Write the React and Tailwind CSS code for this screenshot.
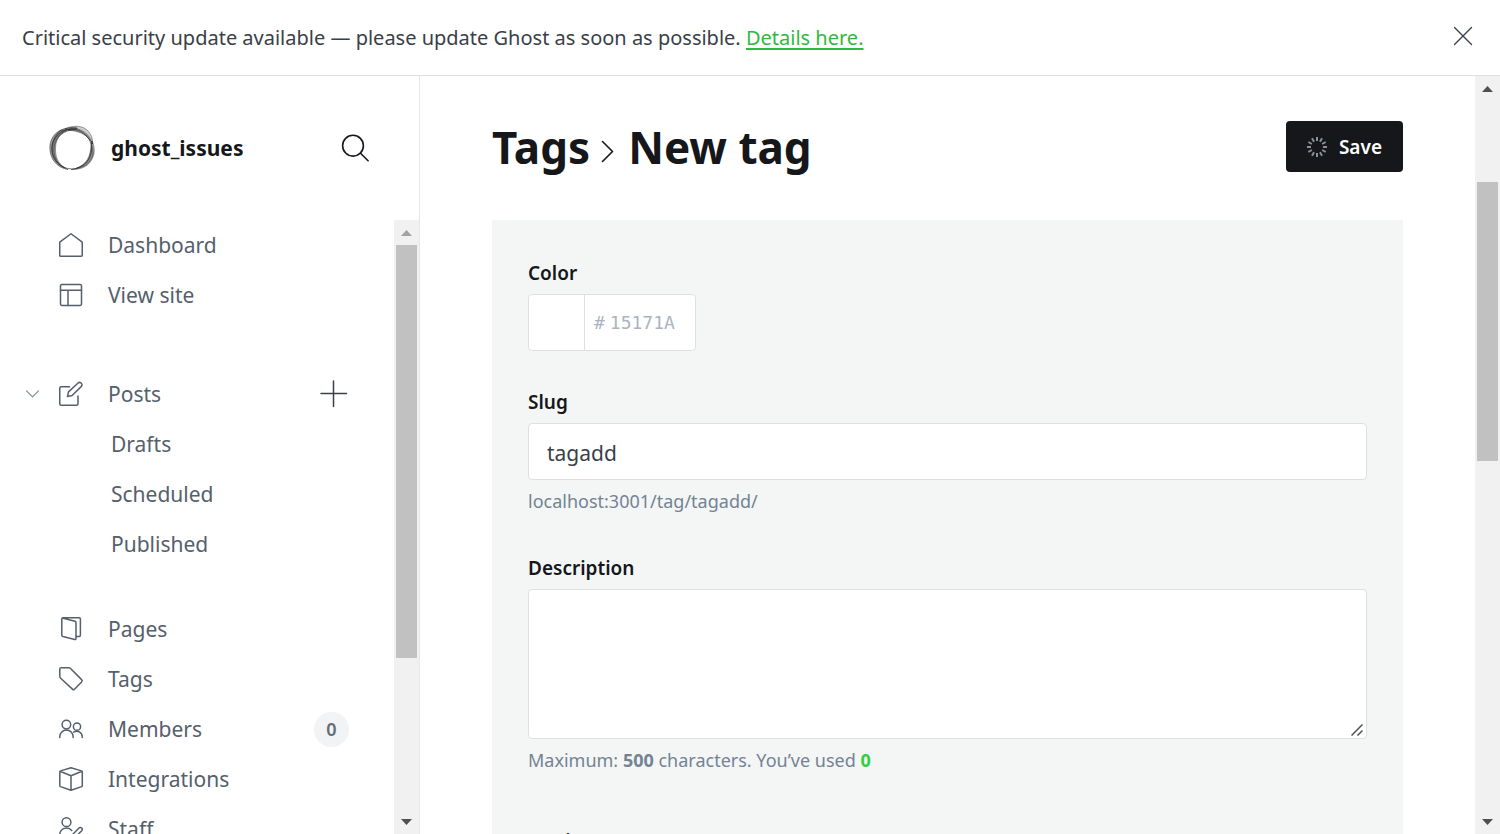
import React, { useState } from 'react';

function Icon({ children, className = 'size-6 text-[#54606c]', viewBox = '0 0 24 24', width = 1.5 }) {
  return (
    <svg
      className={`shrink-0 overflow-visible ${className}`}
      viewBox={viewBox}
      fill="none"
      stroke="currentColor"
      strokeWidth={width}
      strokeLinecap="round"
      strokeLinejoin="round"
      aria-hidden="true"
    >
      {children}
    </svg>
  );
}

const icons = {
  home: <path d="M.75 9.200 12 .75l11.250 8.450V22.300a.95.95 0 0 1-.95.95H1.700a.95.95 0 0 1-.95-.95z" />,
  site: (
    <>
      <rect x="1.500" y="1.500" width="21" height="21" rx="1.400" />
      <path d="M1.500 7.300h21M9 7.300v15.200" />
    </>
  ),
  posts: (
    <>
      <path d="M10.500 4.700H2.200A1.450 1.450 0 0 0 .75 6.150v15.650a1.450 1.450 0 0 0 1.450 1.450h15.350A1.450 1.450 0 0 0 19 21.800V14" />
      <path d="m13.100 13.500-4.600 1 1-4.600L18.800 1.300a2.300 2.300 0 0 1 3.600 3.100z" />
    </>
  ),
  pages: (
    <path d="M3.200 1 16 4.300c.6.2 1 .6 1 1.200v16c0 .7-.6 1.100-1.300.9L3.900 19.500c-.7-.2-1.100-.6-1.100-1.300V1.900c0-.8.5-1.200 1.200-1.200h16.200c.7 0 1.200.5 1.200 1.200v16.400c0 .7-.5 1.200-1.200 1.200H17" />
  ),
  tag: <path d="M2.300.7h7.600c.6 0 1 .2 1.400.6l11.300 11.300c.8.8.8 1.600 0 2.400l-6.800 7.100c-.8.8-1.600.8-2.400 0L1.400 11a2 2 0 0 1-.6-1.400V2.200C.8 1.200 1.300.7 2.300.7z" />,
  members: (
    <>
      <circle cx="7.400" cy="7.600" r="4.300" />
      <circle cx="18" cy="9.700" r="3.600" />
      <path d="M.75 20.500v-.8a6.700 6.700 0 0 1 13.400 0v.8M14.600 15.100a5.600 5.600 0 0 1 8.650 4.600v.8" />
    </>
  ),
  cube: <path d="M12 .75 22.600 3.900c.4.1.7.4.7.8v14c0 .4-.2.8-.6.9L12 23.300 1.400 19.600a1 1 0 0 1-.6-.9v-14c0-.4.3-.7.7-.8zM1 4.200l11 4.600 11-4.600M12 8.800v14.400" />,
  staff: (
    <>
      <circle cx="7.500" cy="5.200" r="4.400" />
      <path d="M.75 18.500v-.8a6.800 6.800 0 0 1 12-4.300" />
      <path d="m16.600 19.900-3.600.9.9-3.600 6.100-6.200a1.900 1.900 0 0 1 2.700 2.700z" />
    </>
  ),
};

function NavItem({ icon, label, children }) {
  return (
    <li className="flex h-[50px] items-center">
      <a href="#" className="flex items-center">
        <Icon>{icons[icon]}</Icon>
        <span className="ml-[25px] pt-0.5">{label}</span>
      </a>
      {children}
    </li>
  );
}

function SubItem({ label }) {
  return (
    <li className="flex h-[50px] items-center pt-0.5 pl-[52px]">
      <a href="#">{label}</a>
    </li>
  );
}

function Arrow({ down, className }) {
  return (
    <div className={`flex h-[25px] shrink-0 items-center justify-center ${className}`}>
      <svg className="h-1.5 w-[11px]" viewBox="0 0 11 6" fill="currentColor" aria-hidden="true">
        <path d={down ? 'M0 0h11L5.5 6z' : 'M0 6h11L5.5 0z'} />
      </svg>
    </div>
  );
}

function Scrollbar({ thumb, upClass }) {
  return (
    <div className="flex w-[25px] shrink-0 flex-col bg-[#f1f1f1]" aria-hidden="true">
      <Arrow className={upClass} />
      <div className="min-h-0 flex-1 px-0.5">{thumb}</div>
      <Arrow down className="text-[#505050]" />
    </div>
  );
}

function Logo() {
  return (
    <svg className="size-[46px] shrink-0" viewBox="0 0 46 46" aria-hidden="true">
      <circle cx="22.700" cy="24" r="19.900" fill="none" stroke="#222" strokeOpacity=".6" strokeWidth="1" />
      <g fill="#222" stroke="#222" strokeWidth=".7" strokeOpacity=".6">
        <path fillOpacity=".45" d="M28 2.800C11 1 .8 10 .8 23 .8 33 7 42.500 19 44.600 9 40 4.800 33 5.300 24 6 12 14 5 28 4.200Z" />
        <path fillOpacity=".3" d="M12 5C8 8 3 14 3 23c0 9 5 17 13 20C8 38 6.500 31 6.500 24 6.500 15 10 9 18 5Z" />
        <path fillOpacity=".22" d="M16 4C23 .3 32 .2 37.500 4.500 42.500 9 44 14 43.500 19 39.500 11.500 32 5.500 24 5.200 21 5.200 19 4.800 16 4Z" />
        <path fillOpacity=".22" d="M22 3C32 3 41 9 43.500 19 40 12 34 8 29 7 26 6.300 23 5 19 5.500Z" />
        <path fillOpacity=".35" d="M43 16C46 22 45.800 28 43.500 33 40 41 33 44.600 22 44.600 32 43 38.500 38 40.500 31.500 42.500 26 42 21 43 16Z" />
        <path fillOpacity=".25" d="M42.500 18C43.500 24 45 27 43.500 31.500 40 39.500 34 42.500 27 43.500 35 40 38 36 40 31 42 26 42 21 42.500 18Z" />
      </g>
    </svg>
  );
}

function Spinner() {
  return (
    <svg className="size-5 shrink-0" viewBox="-10 -10 20 20" stroke="#8b9096" strokeWidth="2" aria-hidden="true">
      {[0, 30, 60, 90, 120, 150, 180, 210, 240, 270, 300, 330].map((a) => (
        <path key={a} d="M0-6v-4" transform={`rotate(${a})`} />
      ))}
    </svg>
  );
}

const label = 'block text-[19px] leading-7 font-semibold text-[#15171a]';
const hint = 'mt-[7px] text-lg leading-7 text-[#738393]';
const field = 'block rounded border border-[#dddfe1] bg-white';

export default function App() {
  const [slug, setSlug] = useState('tagadd');
  const [description, setDescription] = useState('');
  const [color, setColor] = useState('');

  return (
    <div className="flex h-screen flex-col overflow-hidden bg-white font-['Noto_Sans','Open_Sans',sans-serif] text-[#394047]">
      <aside className="flex h-[76px] shrink-0 items-center justify-between border-b border-[#dddfe1] pr-7 pl-[22px]">
        <p className="text-[20px]">
          Critical security update available — please update Ghost as soon as possible.{' '}
          <a href="#" className="text-[#30b940] underline decoration-2 underline-offset-[3px]">Details here.</a>
        </p>
        <button type="button" aria-label="Close" className="mb-1">
          <Icon className="size-[18px] text-[#394047]" viewBox="0 0 18 18" width={1.4}>
            <path d="m.5.5 17 17M17.500.5l-17 17" />
          </Icon>
        </button>
      </aside>

      <div className="flex min-h-0 flex-1">
        <nav className="flex w-[420px] shrink-0 flex-col border-r border-[#e5e7e9]">
          <div className="flex h-36 shrink-0 items-center pr-[50px] pl-[49px]">
            <Logo />
            <div className="ml-4 flex-1 pt-0.5 text-[21px] font-bold text-[#15171a]">ghost_issues</div>
            <button type="button" aria-label="Search" className="mb-px">
              <Icon className="size-7 text-[#15171a]" viewBox="0 0 28 28" width={1.6}>
                <circle cx="12" cy="11.700" r="10.400" />
                <path d="m19.500 19.200 7.600 7.600" />
              </Icon>
            </button>
          </div>

          <div className="flex min-h-0 flex-1">
            <div className="min-w-0 flex-1 overflow-hidden pr-[45px] pl-[59px] text-[21px] text-[#54606c]">
              <ul>
                <NavItem icon="home" label="Dashboard" />
                <NavItem icon="site" label="View site" />
              </ul>
              <ul className="mt-[49px]">
                <li className="-ml-[33px] flex h-[50px] items-center">
                  <button type="button" aria-label="Collapse posts" className="mr-5">
                    <Icon className="h-2 w-[13px] text-[#7c8b9a]" viewBox="0 0 13 8" width={1.2}>
                      <path d="m.5.8 6 6 6-6" />
                    </Icon>
                  </button>
                  <a href="#" className="flex flex-1 items-center">
                    <Icon>{icons.posts}</Icon>
                    <span className="ml-[25px] pt-0.5">Posts</span>
                  </a>
                  <button type="button" aria-label="New post" className="mr-0.5">
                    <Icon className="size-[26px] text-[#394047]" viewBox="0 0 26 26">
                      <path d="M12.500 0v25.500M0 12.500h25.500" />
                    </Icon>
                  </button>
                </li>
                <SubItem label="Drafts" />
                <SubItem label="Scheduled" />
                <SubItem label="Published" />
              </ul>
              <ul className="mt-[35px]">
                <NavItem icon="pages" label="Pages" />
                <NavItem icon="tag" label="Tags" />
                <NavItem icon="members" label="Members">
                  <span className="ml-auto flex size-[35px] items-center justify-center rounded-full bg-[#f1f3f4] text-lg font-semibold text-[#626d79]">0</span>
                </NavItem>
                <NavItem icon="cube" label="Integrations" />
                <NavItem icon="staff" label="Staff" />
              </ul>
            </div>
            <Scrollbar upClass="text-[#a3a3a3]" thumb={<div className="h-[73.2%] bg-[#c1c1c1]" />} />
          </div>
        </nav>

        <main className="min-w-0 flex-1 overflow-hidden px-[72px]">
          <header className="flex h-36 items-center justify-between">
            <h1 className="mb-0.5 flex items-center text-[44px] font-bold text-[#15171a]">
              <a href="#">Tags</a>
              <Icon className="mt-2 mr-[15px] ml-3 h-[21px] w-[11px] text-[#15171a]" viewBox="0 0 11 21" width={1.6}>
                <path d="m.5.5 10 10-10 10" />
              </Icon>
              New tag
            </h1>
            <button type="button" className="mb-[3px] flex h-[51px] items-center gap-3 rounded bg-[#15171a] px-[21px] text-[19px] font-semibold text-white">
              <Spinner />
              <span className="pt-0.5">Save</span>
            </button>
          </header>

          <form className="bg-[#f4f6f6] px-9 pt-[39px] pb-10">
            <label htmlFor="color" className={label}>Color</label>
            <div className={`${field} mt-[7px] flex h-[57px] w-[168px] overflow-hidden`}>
              <div className="w-14 shrink-0 border-r border-[#dddfe1]" />
              <div className="flex min-w-0 items-center pl-[9px] font-['DejaVu_Sans_Mono',monospace] text-lg text-[#abb4be]">
                <span>#</span>
                <input
                  id="color"
                  value={color}
                  onChange={(e) => setColor(e.target.value)}
                  placeholder="15171A"
                  className="ml-[5px] w-full min-w-0 outline-none placeholder:text-[#abb4be]"
                />
              </div>
            </div>

            <label htmlFor="slug" className={`${label} mt-[37px]`}>Slug</label>
            <input
              id="slug"
              value={slug}
              onChange={(e) => setSlug(e.target.value)}
              className={`${field} mt-[7px] h-[57px] w-full px-[18px] pt-0.5 text-[21px] outline-none`}
            />
            <p className={hint}>localhost:3001/tag/tagadd/</p>

            <label htmlFor="description" className={`${label} mt-[39px]`}>Description</label>
            <div className="relative mt-[7px]">
              <textarea
                id="description"
                value={description}
                onChange={(e) => setDescription(e.target.value)}
                className={`${field} h-[150px] w-full resize-none px-[18px] py-3 text-[21px] outline-none`}
              />
              <svg className="pointer-events-none absolute right-1 bottom-[3px] size-3" viewBox="0 0 12 12" stroke="#505050" strokeWidth="1.500" aria-hidden="true">
                <path d="M.5 11.500 11.500.5M6.500 11.500l5-5" />
              </svg>
            </div>
            <p className={hint}>
              Maximum: <b>500</b> characters. You’ve used <b className="text-[#30cf43]">{description.length}</b>
            </p>

            <label htmlFor="image" className={`${label} mt-[53px]`}>Tag image</label>
            <input id="image" type="file" className="mt-[7px] block" />
          </form>
        </main>

        <Scrollbar
          upClass="text-[#505050]"
          thumb={
            <div className="flex h-full flex-col">
              <div className="h-[11.4%]" />
              <div className="h-[39.4%] bg-[#c1c1c1]" />
            </div>
          }
        />
      </div>
    </div>
  );
}
